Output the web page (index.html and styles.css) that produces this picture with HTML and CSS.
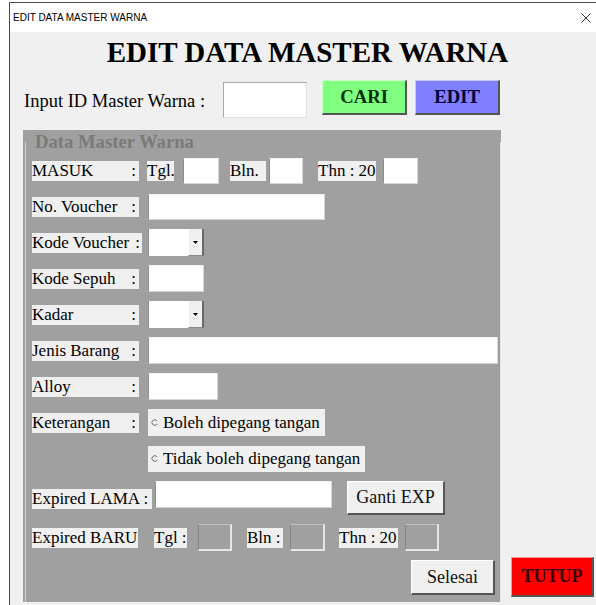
FILE: index.html
```html
<!DOCTYPE html>
<html lang="id">
<head>
<meta charset="utf-8">
<title>EDIT DATA MASTER WARNA</title>
<link rel="stylesheet" href="styles.css">
</head>
<body>
<div class="window">
  <div class="titlebar">
    <span class="caption">EDIT DATA MASTER WARNA</span>
    <svg class="close" width="10" height="10" viewBox="0 0 10 10" aria-hidden="true">
      <path d="M0.5 0.5 L9.5 9.5 M9.5 0.5 L0.5 9.5" stroke="#3a3a3a" stroke-width="1" fill="none"/>
    </svg>
  </div>

  <div class="client">
    <h1 class="heading">EDIT DATA MASTER WARNA</h1>

    <div class="search">
      <span class="search-label">Input ID Master Warna :</span>
      <span class="field id-field"></span>
      <button class="btn btn-cari">CARI</button>
      <button class="btn btn-edit">EDIT</button>
    </div>

    <div class="lower">
      <div class="panel">
        <fieldset class="frame">
          <legend>Data Master Warna</legend>
          <div class="rows">

            <div class="row">
              <span class="lbl"><span>MASUK</span><span>:</span></span>
              <span class="tag sp8 w27">Tgl.</span>
              <span class="field h26 sp9 w36"></span>
              <span class="tag sp11 w36">Bln.</span>
              <span class="field h26 sp3 w34"></span>
              <span class="tag sp15 w58">Thn : 20</span>
              <span class="field h26 sp7 w35"></span>
            </div>

            <div class="row">
              <span class="lbl"><span>No. Voucher</span><span>:</span></span>
              <span class="field h26 sp9 w177"></span>
            </div>

            <div class="row">
              <span class="lbl lbl-wide"><span>Kode Voucher</span><span>:</span></span>
              <span class="combo sp6">
                <span class="combo-btn">
                  <svg width="5" height="3" viewBox="0 0 5 3" aria-hidden="true"><path d="M0 0 H5 L2.5 3 Z" fill="#000"/></svg>
                </span>
              </span>
            </div>

            <div class="row">
              <span class="lbl"><span>Kode Sepuh</span><span>:</span></span>
              <span class="field sp9 w56"></span>
            </div>

            <div class="row">
              <span class="lbl"><span>Kadar</span><span>:</span></span>
              <span class="combo sp9">
                <span class="combo-btn">
                  <svg width="5" height="3" viewBox="0 0 5 3" aria-hidden="true"><path d="M0 0 H5 L2.5 3 Z" fill="#000"/></svg>
                </span>
              </span>
            </div>

            <div class="row">
              <span class="lbl"><span>Jenis Barang</span><span>:</span></span>
              <span class="field sp9 w350"></span>
            </div>

            <div class="row">
              <span class="lbl"><span>Alloy</span><span>:</span></span>
              <span class="field sp9 w70"></span>
            </div>

            <div class="row">
              <span class="lbl"><span>Keterangan</span><span>:</span></span>
              <label class="opt sp9">
                <svg class="radio" width="7" height="7" viewBox="0 0 7 7" aria-hidden="true">
                  <circle cx="3.5" cy="3.5" r="2.8" fill="none" stroke="#e2e2e2" stroke-width="0.9"/>
                  <path d="M6 1.8 A2.8 2.8 0 1 0 6 5.2" fill="none" stroke="#6a6a6a" stroke-width="0.9"/>
                </svg>
                <span>Boleh dipegang tangan</span>
              </label>
            </div>

            <div class="row">
              <label class="opt opt-indent">
                <svg class="radio" width="7" height="7" viewBox="0 0 7 7" aria-hidden="true">
                  <circle cx="3.5" cy="3.5" r="2.8" fill="none" stroke="#e2e2e2" stroke-width="0.9"/>
                  <path d="M6 1.8 A2.8 2.8 0 1 0 6 5.2" fill="none" stroke="#6a6a6a" stroke-width="0.9"/>
                </svg>
                <span>Tidak boleh dipegang tangan</span>
              </label>
            </div>

            <div class="row row-exp">
              <span class="lbl lbl-lama"><span>Expired LAMA :</span></span>
              <span class="field sp3 w177 exp-field"></span>
              <button class="btn btn-plain btn-ganti sp15">Ganti EXP</button>
            </div>

            <div class="row">
              <span class="lbl lbl-baru"><span>Expired BARU</span></span>
              <span class="tag sp16 w33">Tgl :</span>
              <span class="field field-dim sp11 w34"></span>
              <span class="tag sp15 w36">Bln :</span>
              <span class="field field-dim sp7 w35"></span>
              <span class="tag sp14 w59">Thn : 20</span>
              <span class="field field-dim sp7 w34"></span>
            </div>

            <div class="row row-end">
              <button class="btn btn-plain btn-selesai">Selesai</button>
            </div>

          </div>
        </fieldset>
      </div>
      <button class="btn btn-tutup">TUTUP</button>
    </div>
  </div>
</div>
</body>
</html>
```

FILE: styles.css
```css
* { box-sizing: border-box; }

html, body {
  margin: 0;
  padding: 0;
}

body {
  width: 596px;
  height: 605px;
  overflow: hidden;
  background: #ffffff;
  font-family: "Liberation Serif", "Times New Roman", serif;
  color: #000;
}

/* ---- window chrome ---- */
.window {
  margin: 2px 0 0 9px;
  width: 596px;
  height: 620px;
  border-top: 1px solid #4a4a4a;
  border-left: 1px solid #4a4a4a;
  background: #f0f0f0;
  display: flex;
  flex-direction: column;
}

.titlebar {
  height: 29px;
  flex: none;
  background: #ffffff;
  display: flex;
  align-items: center;
  justify-content: space-between;
  padding-left: 3px;
}

.caption {
  font: 10px "Liberation Sans", Arial, sans-serif;
  color: #000;
}

.close { margin-right: 14px; }

/* ---- client area ---- */
.client {
  display: flex;
  flex-direction: column;
}

.heading {
  margin: 3px 0 0;
  text-align: center;
  font-size: 29px;
  line-height: 34px;
  font-weight: bold;
}

.search {
  display: flex;
  align-items: flex-start;
  margin-top: 11px;
  padding-left: 14px;
}

.search-label {
  font-size: 18.5px;
  line-height: 22px;
  margin-top: 10px;
}

/* text boxes */
.field {
  display: block;
  flex: none;
  height: 27px;
  background: #ffffff;
  border-style: solid;
  border-width: 1px;
  border-color: #f4f4f4 #d6d6d6 #d6d6d6 #8e8e8e;
}

.search .id-field {
  margin-left: 18px;
  margin-top: 2px;
  width: 84px;
  height: 36px;
  border-color: #a8a8a8 #e0e0e0 #e0e0e0 #a8a8a8;
}

.field-dim {
  background: #a0a0a0;
  border-width: 1px 2px 2px 1px;
  border-color: #c2c2c2 #e6e6e6 #e6e6e6 #868686;
}

.h26 { height: 26px; }

/* ---- buttons ---- */
.btn {
  padding: 0;
  margin: 0;
  border-style: solid;
  border-width: 1px 2px 2px 1px;
  border-color: #ffffff #555555 #555555 #ffffff;
  font-family: "Liberation Serif", "Times New Roman", serif;
  font-size: 18.67px;
  font-weight: bold;
  cursor: default;
}

.btn-cari {
  margin-left: 15px;
  width: 85px;
  height: 35px;
  background: #80ff80;
  color: #003000;
  border-color: #c8ffc8 #555555 #555555 #c8ffc8;
}

.btn-edit {
  margin-left: 8px;
  width: 85px;
  height: 35px;
  background: #8080ff;
  color: #000040;
  border-color: #c8c8ff #555555 #555555 #c8c8ff;
}

.btn-tutup {
  margin-left: 10px;
  margin-bottom: 5px;
  width: 83px;
  height: 40px;
  background: #ff0000;
  color: #300000;
  font-size: 18px;
  border-color: #ff9090 #555555 #555555 #ff9090;
}

.btn-plain {
  background: #f0f0f0;
  color: #111;
  font-weight: normal;
  font-size: 18px;
}

.btn-ganti {
  width: 98px;
  height: 34px;
}

.btn-selesai {
  width: 84px;
  height: 35px;
}

/* ---- grey data panel ---- */
.lower {
  display: flex;
  align-items: flex-end;
  margin-top: 12px;
  padding-left: 13px;
}

.panel {
  width: 478px;
  height: 472px;
  background: #a0a0a0;
  padding: 1px 0 0 2px;
}

.frame {
  margin: 0;
  height: 100%;
  min-width: 0;
  padding: 0 5px 5px 6px;
  border: 0;
  border-left: 1px solid #cfcfcf;
  border-right: 1px solid #e4e4e4;
}

.frame legend {
  padding: 0;
  margin-left: 3px;
  font-size: 18.67px;
  line-height: 21px;
  font-weight: bold;
  color: #7a7a7a;
}

.rows {
  display: flex;
  flex-direction: column;
  gap: 9px;
  margin-top: 5px;
}

.row {
  display: flex;
  align-items: center;
  height: 27px;
}

.row-exp {
  height: 34px;
  align-items: flex-start;
}

.row-exp .lbl { margin-top: 8px; }
.row-exp .exp-field { margin-top: 0; }

.row-end {
  height: 35px;
  justify-content: flex-end;
}

/* labels with light background */
.lbl, .tag {
  height: 20px;
  line-height: 20px;
  font-size: 17px;
  background: #f0f0f0;
  white-space: nowrap;
}

.lbl {
  display: flex;
  justify-content: space-between;
  width: 107px;
  padding-right: 3px;
  flex: none;
}

.lbl-wide { width: 110px; padding-right: 2px; }
.lbl-lama { width: 120px; padding-right: 1px; }
.lbl-baru { width: 106px; }

.tag { flex: none; }

/* drop-down boxes */
.combo {
  display: flex;
  justify-content: flex-end;
  width: 56px;
  height: 27px;
  background: #ffffff;
  border-left: 1px solid #8e8e8e;
  flex: none;
}

.combo-btn {
  width: 16px;
  height: 100%;
  background: #f0f0f0;
  border-left: 1px solid #ffffff;
  border-right: 2px solid #6a6a6a;
  border-bottom: 1px solid #8a8a8a;
  display: flex;
  align-items: center;
  justify-content: center;
  padding-top: 1px;
}

/* option buttons */
.opt {
  display: flex;
  align-items: center;
  height: 27px;
  padding: 0 5px 0 3px;
  background: #f0f0f0;
  font-size: 17px;
  white-space: nowrap;
  flex: none;
}

.opt .radio { margin-right: 5px; flex: none; }
.opt-indent { margin-left: 116px; height: 26px; }

/* widths */
.w27 { width: 27px; }
.w33 { width: 33px; }
.w34 { width: 34px; }
.w35 { width: 35px; }
.w36 { width: 36px; }
.w56 { width: 56px; }
.w58 { width: 58px; }
.w59 { width: 59px; }
.w70 { width: 70px; }
.w177 { width: 177px; }
.w350 { width: 350px; }

/* horizontal spacing */
.sp3 { margin-left: 3px; }
.sp6 { margin-left: 6px; }
.sp7 { margin-left: 7px; }
.sp8 { margin-left: 8px; }
.sp9 { margin-left: 9px; }
.sp11 { margin-left: 11px; }
.sp14 { margin-left: 14px; }
.sp15 { margin-left: 15px; }
.sp16 { margin-left: 16px; }
```
